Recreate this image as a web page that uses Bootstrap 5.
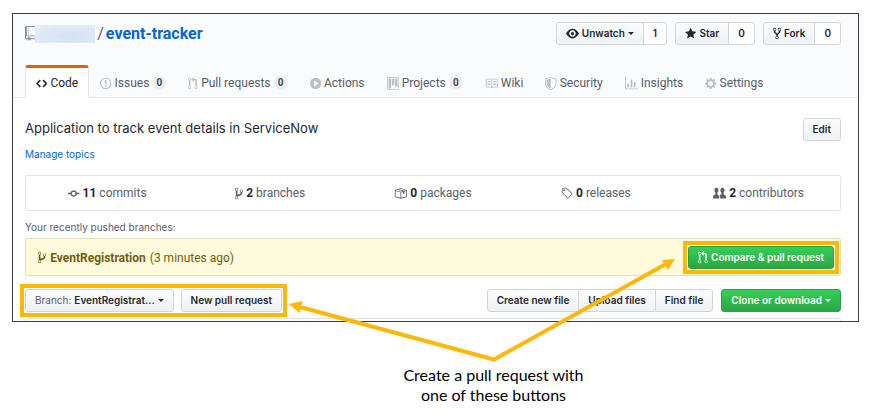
<!DOCTYPE html>
<html lang="en">
<head>
<meta charset="utf-8">
<meta name="viewport" content="width=device-width, initial-scale=1">
<title>event-tracker</title>
<link href="https://cdn.jsdelivr.net/npm/bootstrap@5.3.0/dist/css/bootstrap.min.css" rel="stylesheet">
<style>
  body { font-family: Roboto, "Liberation Sans", sans-serif; font-size: 12px; line-height: 16px; color: #24292e; background: #fff; }
  a { color: #0366d6; text-decoration: none; }
  .guide { padding: 13px 12px 0; }
  .repo-frame { border: 1px solid #3b3d40; }
  .repo-head { background: #fafbfc; border-bottom: 1px solid #e1e4e8; padding: 8px 17px 0 12px; }
  .repo-title { font-size: 16px; line-height: 20px; color: #586069; gap: 2px; }
  .repo-title a { font-weight: 700; }
  .owner-blur { width: 60px; height: 18px; margin-left: -3px; background: radial-gradient(ellipse at 60% 60%, #d3e2f5, #e6eef9); }
  .oct { fill: currentColor; flex: none; height: 13px; width: auto; }
  .oct-repo { height: 15px; }
  .oct-pale { color: #bcc0c4; }
  .gh-btn { --bs-btn-font-family: Inter, "Liberation Sans", sans-serif; --bs-btn-font-size: 10px; --bs-btn-line-height: 15px; --bs-btn-padding-y: 3px; --bs-btn-padding-x: 9px; --bs-btn-font-weight: 600;
    --bs-btn-border-radius: 3px; --bs-btn-color: #24292e; --bs-btn-border-color: #d3d6d9; --bs-btn-hover-color: #24292e; --bs-btn-hover-border-color: #b5b9bd;
    background: linear-gradient(#fafbfc, #eff3f6); white-space: nowrap; display: inline-flex; align-items: center; justify-content: center; gap: 3px; }
  .gh-count { background: #fff; }
  .gh-green { --bs-btn-color: #fff; --bs-btn-hover-color: #fff; --bs-btn-border-color: #2aa146; background: linear-gradient(#34d058, #28a745); }
  .arrow-down { border: 3px solid transparent; border-top-color: currentColor; border-bottom: 0; }
  .repo-tabs { margin-top: 20px; margin-bottom: -1px; }
  .repo-tabs .nav-link { display: flex; align-items: center; gap: 3px; padding: 1px 10px 0; height: 33px; color: #586069; border: 1px solid transparent; border-top-width: 3px; white-space: nowrap; }
  .repo-tabs .nav-link.active { background: #fff; color: #24292e; border-color: #e36209 #e1e4e8 transparent; border-radius: 3px 3px 0 0; }
  .tab-count { min-width: 14px; height: 14px; line-height: 14px; border-radius: 7px; background: #ebedef; font-size: 10px; font-weight: 700; text-align: center; color: #444d56; }
  .repo-body { padding: 20px 17px 0 12px; }
  .about-text { font-family: Inter, "Liberation Sans", sans-serif; font-size: 13px; line-height: 20px; }
  .topics { font-family: Inter, "Liberation Sans", sans-serif; font-size: 10px; line-height: 14px; margin-top: 6px; }
  .stats { border: 1px solid #e1e4e8; border-radius: 2px; margin-top: 14px; height: 36px; color: #586069; }
  .stats a { color: inherit; gap: 3px; }
  .stats strong { color: #24292e; font-weight: 700; }
  .pushed { font-family: Inter, "Liberation Sans", sans-serif; font-size: 10px; line-height: 15px; margin-top: 9px; margin-bottom: 3px; color: #586069; }
  .notice { background: #fffbdd; border: 1px solid #e6dfb4; border-radius: 2px; color: #735c0f; padding: 7px 6px 6px 12px; gap: 4px; }
  .notice a { color: inherit; font-weight: 700; }
  .callout-mark { outline: 4px solid #fdb80a; outline-offset: 1px; }
  .toolbar { margin-top: 13px; }
  .toolbar .callout-mark { gap: 7px; }
  .branch-label { color: #586069; font-weight: 400; }
  .file-edge { height: 3px; border: 1px solid #dfe2e5; border-bottom: 0; border-radius: 3px 3px 0 0; margin-top: 6px; }
  .arrows { inset: 0; pointer-events: none; }
  .caption-text { font-family: Lato, "Liberation Sans", sans-serif; font-size: 16px; line-height: 20px; color: #000; padding-left: 116px; margin-top: 43px; }
</style>
<script src="https://cdn.jsdelivr.net/npm/bootstrap@5.3.0/dist/js/bootstrap.bundle.min.js"></script>
</head>
<body>
<svg class="d-none" aria-hidden="true">
  <symbol id="i-branch" viewBox="0 0 10 16"><path fill-rule="evenodd" d="M10 5c0-1.11-.89-2-2-2a1.993 1.993 0 0 0-1 3.72v.3c-.02.52-.23.98-.63 1.38-.4.4-.86.61-1.38.63-.83.02-1.48.16-2 .45V4.72a1.993 1.993 0 0 0-1-3.72C.88 1 0 1.89 0 3a2 2 0 0 0 1 1.72v6.56c-.59.35-1 .99-1 1.72 0 1.11.89 2 2 2 1.11 0 2-.89 2-2 0-.53-.2-1-.53-1.36.09-.06.48-.41.59-.47.25-.11.56-.17.94-.17 1.05-.05 1.95-.45 2.75-1.25S8.95 7.77 9 6.73h-.02C9.59 6.37 10 5.73 10 5zM2 1.8c.66 0 1.2.55 1.2 1.2 0 .65-.55 1.2-1.2 1.2C1.35 4.2.8 3.65.8 3c0-.65.55-1.2 1.2-1.2zm0 12.41c-.66 0-1.2-.55-1.2-1.2 0-.65.55-1.2 1.2-1.2.65 0 1.2.55 1.2 1.2 0 .65-.55 1.2-1.2 1.2zm6-8c-.66 0-1.2-.55-1.2-1.2 0-.65.55-1.2 1.2-1.2.65 0 1.2.55 1.2 1.2 0 .65-.55 1.2-1.2 1.2z"/></symbol>
  <symbol id="i-pull" viewBox="0 0 12 16"><path fill-rule="evenodd" d="M11 11.28V5c-.03-.78-.34-1.47-.94-2.06C9.46 2.35 8.78 2.03 8 2H7V0L4 3l3 3V4h1c.27.02.48.11.69.31.21.2.3.42.31.69v6.28A1.993 1.993 0 0 0 10 15a1.993 1.993 0 0 0 1-3.72zm-1 2.92c-.66 0-1.2-.55-1.2-1.2 0-.65.55-1.2 1.2-1.2.65 0 1.2.55 1.2 1.2 0 .65-.55 1.2-1.2 1.2zM4 3c0-1.11-.89-2-2-2a1.993 1.993 0 0 0-1 3.72v6.56A1.993 1.993 0 0 0 2 15a1.993 1.993 0 0 0 1-3.72V4.72c.59-.34 1-.98 1-1.72zm-.8 10c0 .66-.55 1.2-1.2 1.2-.65 0-1.2-.55-1.2-1.2 0-.65.55-1.2 1.2-1.2.65 0 1.2.55 1.2 1.2zM2 4.2C1.34 4.2.8 3.65.8 3c0-.65.55-1.2 1.2-1.2.65 0 1.2.55 1.2 1.2 0 .65-.55 1.2-1.2 1.2z"/></symbol>
</svg>

<main class="guide position-relative min-vh-100">
  <section class="repo-frame">
    <header class="repo-head">
      <div class="d-flex align-items-center justify-content-between">
        <h1 class="repo-title d-flex align-items-center m-0 fw-normal">
          <svg class="oct oct-repo" viewBox="0 0 12 16" aria-hidden="true"><path fill="#8a9199" fill-rule="evenodd" d="M4 9H3V8h1v1zm0-3H3v1h1V6zm0-2H3v1h1V4zm0-2H3v1h1V2zm8-1v12c0 .55-.45 1-1 1H6v2l-1.5-1.5L3 16v-2H1c-.55 0-1-.45-1-1V1c0-.55.45-1 1-1h10c.55 0 1 .45 1 1zm-1 10H1v2h2v-1h3v1h5v-2zm0-10H2v9h9V1z"/></svg>
          <span class="owner-blur"></span><span>/</span>
          <a href="#">event-tracker</a>
        </h1>
        <div class="d-flex gap-2">
          <div class="btn-group">
            <button type="button" class="btn gh-btn"><svg class="oct" viewBox="0 0 16 16" aria-hidden="true"><path fill-rule="evenodd" d="M8.06 2C3 2 0 8 0 8s3 6 8.06 6C13 14 16 8 16 8s-3-6-7.94-6zM8 12c-2.2 0-4-1.78-4-4 0-2.2 1.8-4 4-4 2.22 0 4 1.8 4 4 0 2.22-1.78 4-4 4zm2-4c0 1.11-.89 2-2 2-1.11 0-2-.89-2-2 0-1.11.89-2 2-2 1.11 0 2 .89 2 2z"/></svg>Unwatch<span class="arrow-down"></span></button>
            <button type="button" class="btn gh-btn gh-count">1</button>
          </div>
          <div class="btn-group">
            <button type="button" class="btn gh-btn"><svg class="oct" viewBox="0 0 14 16" aria-hidden="true"><path d="M14 6l-4.9-.64L7 1 4.9 5.36 0 6l3.6 3.26L2.67 14 7 11.67 11.33 14l-.93-4.74L14 6z"/></svg>Star</button>
            <button type="button" class="btn gh-btn gh-count">0</button>
          </div>
          <div class="btn-group">
            <button type="button" class="btn gh-btn"><svg class="oct" viewBox="0 0 10 16" aria-hidden="true"><path fill-rule="evenodd" d="M8 1a1.993 1.993 0 0 0-1 3.72V6L5 8 3 6V4.72A1.993 1.993 0 0 0 2 1a1.993 1.993 0 0 0-1 3.72V6.5l3 3v1.78A1.993 1.993 0 0 0 5 15a1.993 1.993 0 0 0 1-3.72V9.5l3-3V4.72A1.993 1.993 0 0 0 8 1zM2 4.2C1.34 4.2.8 3.65.8 3c0-.65.55-1.2 1.2-1.2.65 0 1.2.55 1.2 1.2 0 .65-.55 1.2-1.2 1.2zm3 10c-.66 0-1.2-.55-1.2-1.2 0-.65.55-1.2 1.2-1.2.65 0 1.2.55 1.2 1.2 0 .65-.55 1.2-1.2 1.2zm3-10c-.66 0-1.2-.55-1.2-1.2 0-.65.55-1.2 1.2-1.2.65 0 1.2.55 1.2 1.2 0 .65-.55 1.2-1.2 1.2z"/></svg>Fork</button>
            <button type="button" class="btn gh-btn gh-count">0</button>
          </div>
        </div>
      </div>
      <nav class="repo-tabs nav flex-nowrap" aria-label="Repository">
        <a class="nav-link active" href="#"><svg class="oct" viewBox="0 0 14 16" aria-hidden="true"><path d="M9.5 3L8 4.5 11.5 8 8 11.5 9.5 13 14 8 9.5 3zm-5 0L0 8l4.5 5L6 11.5 2.5 8 6 4.5 4.5 3z"/></svg>Code</a>
        <a class="nav-link" href="#"><svg class="oct oct-pale" viewBox="0 0 14 16" aria-hidden="true"><path fill-rule="evenodd" d="M7 2.3c3.14 0 5.7 2.56 5.7 5.7s-2.56 5.7-5.7 5.7A5.71 5.71 0 0 1 1.3 8c0-3.14 2.56-5.7 5.7-5.7zM7 1C3.14 1 0 4.14 0 8s3.14 7 7 7 7-3.14 7-7-3.14-7-7-7zm1 3H6v5h2V4zm0 6H6v2h2v-2z"/></svg>Issues <span class="tab-count">0</span></a>
        <a class="nav-link" href="#"><svg class="oct oct-pale" viewBox="0 0 12 16" aria-hidden="true"><use href="#i-pull"/></svg>Pull requests <span class="tab-count">0</span></a>
        <a class="nav-link" href="#"><svg class="oct oct-pale" viewBox="0 0 14 16" aria-hidden="true"><path fill-rule="evenodd" d="M14 8A7 7 0 1 1 0 8a7 7 0 0 1 14 0zm-8.223 3.482l4.599-3.066a.5.5 0 0 0 0-.832L5.777 4.518A.5.5 0 0 0 5 4.934v6.132a.5.5 0 0 0 .777.416z"/></svg>Actions</a>
        <a class="nav-link" href="#"><svg class="oct oct-pale" viewBox="0 0 15 16" aria-hidden="true"><path fill-rule="evenodd" d="M10 12h3V2h-3v10zm-4-2h3V2H6v8zm-4 4h3V2H2v12zm-1 1h13V1H1v14zM14 0H1a1 1 0 0 0-1 1v14a1 1 0 0 0 1 1h13a1 1 0 0 0 1-1V1a1 1 0 0 0-1-1z"/></svg>Projects <span class="tab-count">0</span></a>
        <a class="nav-link" href="#"><svg class="oct oct-pale" viewBox="0 0 16 16" aria-hidden="true"><path fill-rule="evenodd" d="M3 5h4v1H3V5zm0 3h4V7H3v1zm0 2h4V9H3v1zm11-5h-4v1h4V5zm0 2h-4v1h4V7zm0 2h-4v1h4V9zm2-6v9c0 .55-.45 1-1 1H9.5l-1 1-1-1H2c-.55 0-1-.45-1-1V3c0-.55.45-1 1-1h5.5l1 1 1-1H15c.55 0 1 .45 1 1zm-8 .5L7.5 3H2v9h6V3.5zm7-.5H9.5l-.5.5V12h6V3z"/></svg>Wiki</a>
        <a class="nav-link" href="#"><svg class="oct oct-pale" viewBox="0 0 14 16" aria-hidden="true"><path fill-rule="evenodd" d="M0 2l7-2 7 2v6.02C14 12.69 8.69 16 7 16c-1.69 0-7-3.31-7-7.98V2zm1 .75L7 1l6 1.75v5.268C13 12.104 8.449 15 7 15c-1.449 0-6-2.896-6-6.982V2.75zm1 .75L7 2v12c-1.207 0-5-2.482-5-5.985V3.5z"/></svg>Security</a>
        <a class="nav-link" href="#"><svg class="oct oct-pale" viewBox="0 0 16 16" aria-hidden="true"><path d="M16 14v1H0V0h1v14h15zM5 13H3V8h2v5zm4 0H7V3h2v10zm4 0h-2V6h2v7z"/></svg>Insights</a>
        <a class="nav-link" href="#"><svg class="oct oct-pale" viewBox="0 0 14 16" aria-hidden="true"><path fill-rule="evenodd" d="M14 8.77v-1.6l-1.94-.64-.45-1.09.88-1.84-1.13-1.13-1.81.91-1.09-.45-.69-1.92h-1.6l-.63 1.94-1.11.45-1.84-.88-1.13 1.13.91 1.81-.45 1.09L0 7.23v1.59l1.94.64.45 1.09-.88 1.84 1.13 1.13 1.81-.91 1.09.45.69 1.92h1.59l.63-1.94 1.11-.45 1.84.88 1.13-1.13-.92-1.81.47-1.09L14 8.75v.02zM7 11c-1.66 0-3-1.34-3-3s1.34-3 3-3 3 1.34 3 3-1.34 3-3 3z"/></svg>Settings</a>
      </nav>
    </header>

    <div class="repo-body">
      <div class="d-flex align-items-start justify-content-between">
        <p class="about-text m-0">Application to track event details in ServiceNow</p>
        <button type="button" class="btn gh-btn">Edit</button>
      </div>
      <div class="topics"><a href="#">Manage topics</a></div>

      <div class="stats d-flex align-items-center">
        <a href="#" class="d-flex flex-fill w-25 align-items-center justify-content-center"><svg class="oct" viewBox="0 0 14 16" aria-hidden="true"><path fill-rule="evenodd" d="M10.86 7c-.45-1.72-2-3-3.86-3-1.86 0-3.41 1.28-3.86 3H0v2h3.14c.45 1.72 2 3 3.86 3 1.86 0 3.41-1.28 3.86-3H14V7h-3.14zM7 10.2c-1.22 0-2.2-.98-2.2-2.2 0-1.22.98-2.2 2.2-2.2 1.22 0 2.2.98 2.2 2.2 0 1.22-.98 2.2-2.2 2.2z"/></svg><strong>11</strong> commits</a>
        <a href="#" class="d-flex flex-fill w-25 align-items-center justify-content-center"><svg class="oct" viewBox="0 0 10 16" aria-hidden="true"><use href="#i-branch"/></svg><strong>2</strong> branches</a>
        <a href="#" class="d-flex flex-fill w-25 align-items-center justify-content-center"><svg class="oct" viewBox="0 0 16 16" aria-hidden="true"><path fill-rule="evenodd" d="M1 4.27v7.47c0 .45.3.84.75.97l6.5 1.73c.16.05.34.05.5 0l6.5-1.73c.45-.13.75-.52.75-.97V4.27c0-.45-.3-.84-.75-.97l-6.5-1.74a1.4 1.4 0 0 0-.5 0L1.75 3.3c-.45.13-.75.52-.75.97zm7 9.09l-6-1.59V5l6 1.61v6.75zM2 4l2.5-.67L11 5.06l-2.5.67L2 4zm13 7.77l-6 1.59V6.61l2-.55V8.5l2-.53V5.53L15 5v6.77zm-2-7.24L6.5 2.8l2-.53L15 4l-2 .53z"/></svg><strong>0</strong> packages</a>
        <a href="#" class="d-flex flex-fill w-25 align-items-center justify-content-center"><svg class="oct" viewBox="0 0 15 16" aria-hidden="true"><path fill-rule="evenodd" d="M7.73 1.73C7.26 1.26 6.62 1 5.96 1H3.5C2.13 1 1 2.13 1 3.5v2.47c0 .66.27 1.3.73 1.77l6.06 6.06c.39.39 1.02.39 1.41 0l4.59-4.59a.996.996 0 0 0 0-1.41L7.73 1.73zM2.38 7.09c-.31-.3-.47-.7-.47-1.13V3.5c0-.88.72-1.59 1.59-1.59h2.47c.42 0 .83.16 1.13.47l6.14 6.13-4.73 4.73-6.13-6.15zM3.01 3h2v2H3V3h.01z"/></svg><strong>0</strong> releases</a>
        <a href="#" class="d-flex flex-fill w-25 align-items-center justify-content-center"><svg class="oct" viewBox="0 0 16 16" aria-hidden="true"><path d="M4.3 1C2.7 1 1.800 2.200 1.800 4c0 1.600.6 2.300 1.200 3v2L1 10c-.7.4-1 1-1 2v2h7.700v-2c0-1-.3-1.600-1-2L5.300 9V7c.6-.7 1.400-1.400 1.400-3 0-1.800-.8-3-2.400-3z"/><path d="M11.700 1c-1.700 0-2.600 1.200-2.600 3 0 1.600.6 2.300 1.200 3v2l-2 1c.3.6.4 1.200.4 2v2H16v-2c0-1-.3-1.600-1-2l-2-1V7c.6-.7 1.200-1.400 1.200-3 0-1.800-.9-3-2.500-3z"/></svg><strong>2</strong> contributors</a>
      </div>

      <p class="pushed">Your recently pushed branches:</p>
      <div class="notice d-flex align-items-center">
        <svg class="oct" viewBox="0 0 10 16" aria-hidden="true"><use href="#i-branch"/></svg>
        <a href="#">EventRegistration</a> <span>(3 minutes ago)</span>
        <div class="callout-mark ms-auto d-flex"><button type="button" class="btn gh-btn gh-green"><svg class="oct" viewBox="0 0 12 16" aria-hidden="true"><use href="#i-pull"/></svg>Compare &amp; pull request</button></div>
      </div>

      <div class="toolbar d-flex align-items-center">
        <div class="callout-mark d-flex me-auto">
          <button type="button" class="btn gh-btn"><span class="branch-label">Branch:</span>EventRegistrat...<span class="arrow-down"></span></button>
          <button type="button" class="btn gh-btn">New pull request</button>
        </div>
        <div class="btn-group me-2">
          <button type="button" class="btn gh-btn">Create new file</button>
          <button type="button" class="btn gh-btn">Upload files</button>
          <button type="button" class="btn gh-btn">Find file</button>
        </div>
        <button type="button" class="btn gh-btn gh-green">Clone or download<span class="arrow-down"></span></button>
      </div>
      <div class="file-edge"></div>
    </div>
  </section>

  <p class="caption-text text-center mb-0">Create a pull request with<br>one of these buttons</p>

  <svg class="arrows position-absolute w-100 h-100" viewBox="0 0 871 418" preserveAspectRatio="none" aria-hidden="true">
    <path d="M300 307L494 359.500L666 264" fill="none" stroke="#fdb80a" stroke-width="4"/>
    <path d="M289 304L302.500 301L299.500 313ZM675 259L668 270L662 260Z" fill="#fdb80a"/>
  </svg>
</main>
</body>
</html>
